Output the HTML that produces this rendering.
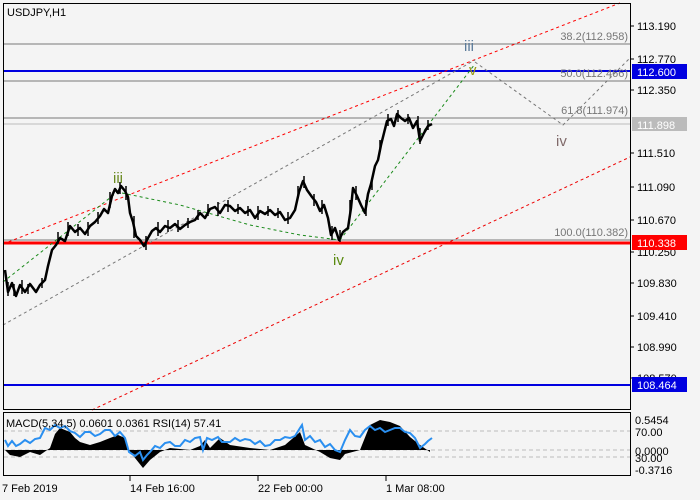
<!DOCTYPE html>
<html><head><meta charset="utf-8"><style>
html,body{margin:0;padding:0;background:#f4f4f4;}
svg{display:block;font-family:"Liberation Sans",sans-serif;}
</style></head><body>
<svg width="700" height="500" viewBox="0 0 700 500" xmlns="http://www.w3.org/2000/svg">
<rect width="700" height="500" fill="#f4f4f4"/>
<line x1="3" y1="44" x2="630" y2="44" stroke="#777" stroke-width="1"/>
<line x1="3" y1="81" x2="630" y2="81" stroke="#777" stroke-width="1"/>
<line x1="3" y1="118" x2="630" y2="118" stroke="#777" stroke-width="1"/>
<line x1="3" y1="124" x2="630" y2="124" stroke="#bbb" stroke-width="1"/>
<line x1="3" y1="240" x2="630" y2="240" stroke="#777" stroke-width="1"/>
<line x1="3" y1="243" x2="630" y2="243" stroke="#f00" stroke-width="3"/>
<line x1="3" y1="71" x2="630" y2="71" stroke="#0000e0" stroke-width="2"/>
<line x1="3" y1="385" x2="630" y2="385" stroke="#0000e0" stroke-width="2"/>
<line x1="3" y1="244" x2="620" y2="3" stroke="#f00" stroke-dasharray="3,3"/>
<line x1="92" y1="410" x2="630" y2="157" stroke="#e00" stroke-dasharray="3,3"/>
<line x1="3" y1="325" x2="475" y2="60" stroke="#777" stroke-dasharray="3,3"/>
<polyline points="3,282 120,190" fill="none" stroke="#1a8a1a" stroke-dasharray="3,3"/>
<polyline points="122,193 180,205 250,225 300,235 340,240" fill="none" stroke="#1a8a1a" stroke-dasharray="3,3"/>
<polyline points="340,240 475,64" fill="none" stroke="#1a8a1a" stroke-dasharray="3,3"/>
<polyline points="475,62 563,125 630,58" fill="none" stroke="#777" stroke-dasharray="3,3"/>
<polyline fill="none" stroke="#000" stroke-width="2.5" stroke-linejoin="round" points="5,270 8,292 12,283 16,296 20,285 25,292 30,284 36,292 40,285 45,280 48,266 52,250 56,245 60,238 65,241 70,226 75,232 80,228 85,234 90,226 95,222 100,216 104,209 108,213 112,196 115,189 118,193 121,186 125,191 128,197 130,213 133,222 136,236 140,240 144,246 148,238 152,231 156,228 160,232 165,226 170,228 175,224 180,229 185,225 190,222 195,220 200,213 205,218 210,209 215,207 220,213 225,205 230,206 235,211 240,208 245,213 250,210 255,218 260,211 265,214 270,210 275,215 280,212 285,220 290,218 295,210 299,192 303,181 307,190 312,197 316,202 320,211 324,205 328,218 331,235 335,228 339,240 343,232 348,228 351,208 353,188 357,196 361,205 365,213 368,194 371,184 375,166 378,160 381,145 384,133 387,121 391,119 394,126 397,114 401,118 405,121 409,118 413,128 417,121 420,141 424,133 428,126 432,124"/>
<path stroke="#000" stroke-width="1.5" fill="none" d="M8,282v14 M14,284v12 M22,280v14 M28,284v10 M42,278v10 M58,232v12 M68,222v14 M78,224v12 M88,222v14 M98,212v12 M110,192v16 M120,182v12 M126,186v14 M134,216v22 M146,236v14 M158,222v14 M168,220v12 M178,220v12 M188,218v10 M198,210v10 M208,204v12 M218,202v14 M228,200v12 M238,204v10 M248,206v10 M258,206v14 M268,206v10 M278,208v10 M288,212v12 M298,186v12 M304,176v12 M314,194v12 M322,200v14 M332,226v14 M340,230v12 M350,200v14 M356,186v14 M366,200v16 M372,178v12 M380,140v12 M388,114v12 M398,110v12 M408,114v10 M418,116v14 M420,128v16 M428,120v10"/>
<text x="113" y="183" font-size="15" fill="#6a8a20">iii</text>
<text x="464" y="51" font-size="15" fill="#5a7a9a">iii</text>
<text x="469" y="75" font-size="15" fill="#9a9a10">v</text>
<text x="556" y="146" font-size="15" fill="#806a6a">iv</text>
<text x="333" y="265" font-size="15" fill="#5a8a10">iv</text>
<g font-size="11" fill="#777" text-anchor="end">
<text x="628" y="40">38.2(112.958)</text>
<text x="628" y="77">50.0(112.466)</text>
<text x="628" y="114">61.8(111.974)</text>
<text x="628" y="236">100.0(110.382)</text>
</g>
<text x="7" y="16" font-size="11" fill="#000">USDJPY,H1</text>
<rect x="3.5" y="3.5" width="627" height="406" fill="none" stroke="#000"/>
<rect x="3.5" y="412.5" width="627" height="63" fill="none" stroke="#000"/>
<g stroke="#000">
<line x1="630" y1="26" x2="634" y2="26"/><line x1="630" y1="59" x2="634" y2="59"/><line x1="630" y1="90" x2="634" y2="90"/><line x1="630" y1="153" x2="634" y2="153"/><line x1="630" y1="187" x2="634" y2="187"/><line x1="630" y1="220" x2="634" y2="220"/><line x1="630" y1="252" x2="634" y2="252"/><line x1="630" y1="283" x2="634" y2="283"/><line x1="630" y1="316" x2="634" y2="316"/><line x1="630" y1="347" x2="634" y2="347"/><line x1="630" y1="378" x2="634" y2="378"/>
</g>
<g font-size="11" fill="#000">
<text x="637" y="30">113.190</text>
<text x="637" y="63">112.770</text>
<text x="637" y="94">112.350</text>
<text x="637" y="157">111.510</text>
<text x="637" y="191">111.090</text>
<text x="637" y="224">110.670</text>
<text x="637" y="256">110.250</text>
<text x="637" y="287">109.830</text>
<text x="637" y="320">109.410</text>
<text x="637" y="351">108.990</text>
<text x="637" y="382">108.570</text>
</g>
<rect x="632" y="64" width="55" height="15" fill="#0000e0"/>
<text x="637" y="76" font-size="11" fill="#fff">112.600</text>
<rect x="632" y="117" width="55" height="14" fill="#bbb"/>
<text x="637" y="129" font-size="11" fill="#fff">111.898</text>
<rect x="632" y="235" width="55" height="15" fill="#f00"/>
<text x="637" y="247" font-size="11" fill="#fff">110.338</text>
<rect x="632" y="377" width="55" height="15" fill="#0000e0"/>
<text x="637" y="389" font-size="11" fill="#fff">108.464</text>
<line x1="4" y1="431" x2="630" y2="431" stroke="#bbb" stroke-dasharray="4,3"/>
<line x1="4" y1="450" x2="630" y2="450" stroke="#bbb" stroke-dasharray="4,3"/>
<line x1="4" y1="457" x2="630" y2="457" stroke="#bbb" stroke-dasharray="4,3"/>
<path fill="#000" d="M5,450 L10,455 L20,457 L30,452 L40,455 L50,448 L55,434 L60,428 L70,432 L75,438 L80,442 L90,445 L100,442 L110,438 L118,435 L125,438 L129,450 L135,458 L143,468 L150,460 L160,452 L170,448 L190,450 L200,446 L205,440 L210,448 L220,438 L230,445 L250,448 L270,450 L285,445 L300,432 L305,445 L320,452 L330,458 L340,460 L345,454 L360,450 L370,425 L380,420 L390,422 L400,426 L410,437 L420,445 L430,452 L430,450 Z"/>
<polyline fill="none" stroke="#2a8ff0" stroke-width="2" points="5,440 8,446 12,441 16,446 20,444 25,440 30,443 35,439 40,438 45,428 50,430 55,425 60,428 65,426 70,431 75,433 80,437 85,432 90,432 95,436 100,434 105,430 110,430 115,436 120,432 125,438 129,452 135,456 140,452 143,460 147,455 150,452 155,446 160,448 165,443 170,442 175,446 180,446 185,440 190,442 195,438 200,437 203,450 207,438 212,440 218,437 222,442 230,442 235,438 240,441 245,439 250,440 255,444 260,441 265,446 270,445 275,440 280,440 285,437 290,438 295,436 300,428 302,425 305,440 310,436 315,442 320,440 325,447 330,444 335,450 340,452 345,440 350,430 355,436 360,437 365,430 370,426 375,430 380,428 385,432 390,430 395,428 400,428 405,432 410,433 415,438 420,448 425,444 428,441 432,438"/>
<text x="6" y="427" font-size="11" fill="#000">MACD(5,34,5) 0.0601 0.0361 RSI(14) 57.41</text>
<g font-size="11" fill="#000">
<text x="635" y="424">0.5454</text>
<text x="635" y="436">70.00</text>
<text x="635" y="455">0.0000</text>
<text x="635" y="462">30.00</text>
<text x="635" y="474">-0.3716</text>
</g>
<g stroke="#000">
<line x1="130" y1="476" x2="130" y2="481"/>
<line x1="258" y1="476" x2="258" y2="481"/>
<line x1="386" y1="476" x2="386" y2="481"/>
</g>
<g font-size="11" fill="#000">
<text x="2" y="492">7 Feb 2019</text>
<text x="130" y="492">14 Feb 16:00</text>
<text x="258" y="492">22 Feb 00:00</text>
<text x="386" y="492">1 Mar 08:00</text>
</g>
</svg>
</body></html>
